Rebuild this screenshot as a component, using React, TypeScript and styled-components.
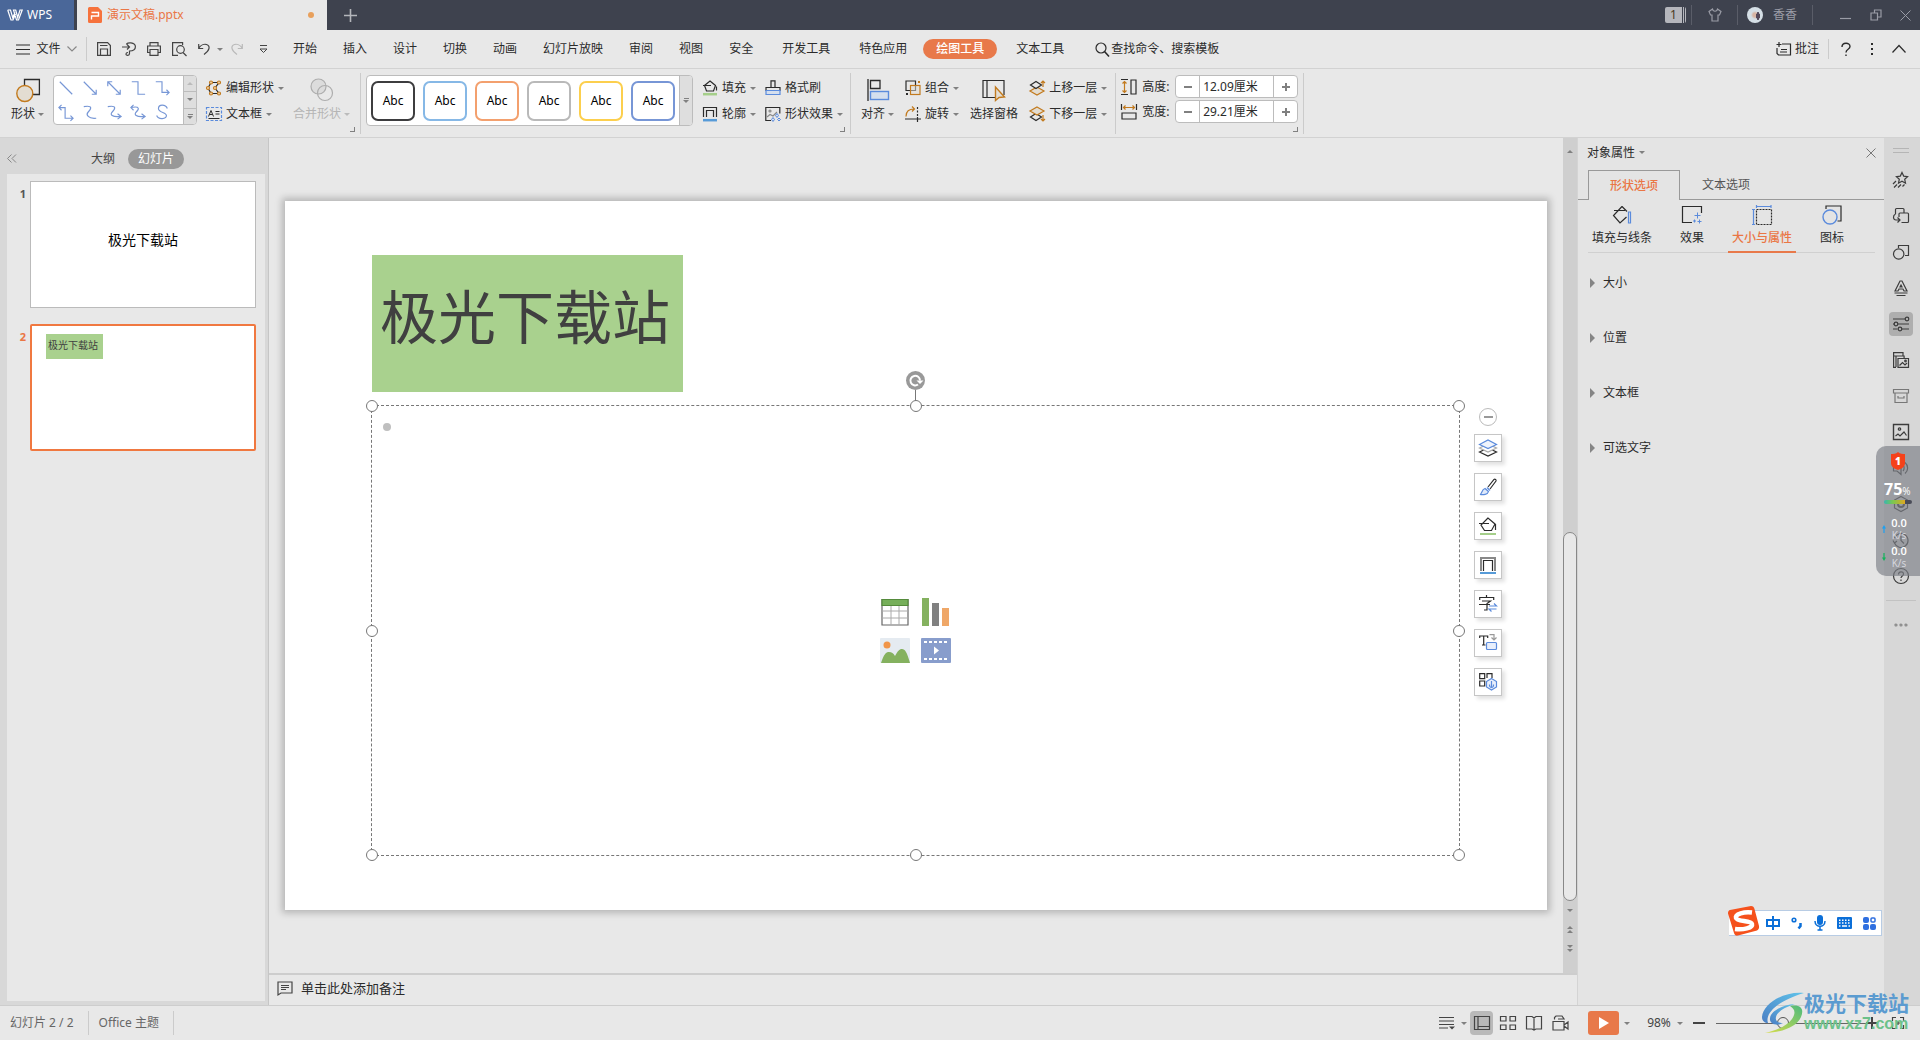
import React from "react";
import styled, { createGlobalStyle, css } from "styled-components";

const C = {
  accent: "#e8794a",
  accentText: "#ea7645",
  text: "#2b2b2b",
  line: "#d2d2d2",
  panel: "#e8e8e8",
  shade: "#d8d8d8",
  amber: "#c27a1e",
  sand: "#e3ddd2",
  blue: "#5b8bdc",
  sky: "#d5dfee",
};

const Global = createGlobalStyle`
  *, *::before, *::after { box-sizing: border-box; }
  body { margin: 0; }
  body, button, input {
    font-family: "Noto Sans", "Noto Sans CJK SC", sans-serif;
    font-size: 12px;
    line-height: 16px;
    color: ${C.text};
  }
  button {
    display: flex;
    align-items: center;
    justify-content: center;
    flex: none;
    margin: 0;
    padding: 0;
    border: 0;
    background: none;
    white-space: nowrap;
  }
`;

/* ---------- icons ---------- */

const Svg = styled.svg`
  display: block;
  flex: none;
  fill: none;
  stroke: currentColor;
  stroke-width: 1.2;
  overflow: visible;
`;

type Art = { w: number; h: number; art: React.ReactNode };

const ICONS: Record<string, Art> = {
  wps: { w: 16, h: 12, art: <path strokeWidth="1.2" d="M.7 1h2.800l2.200 7.500L8 3.500M.7 1l3.300 10h2L8.500 5M6.500 1h2.200l2 7.500L13 1h2.200l-3.700 10h-2z" /> },
  ppt: {
    w: 14, h: 16,
    art: (<><path fill="#f6723c" stroke="none" d="M1.500 0h8.500l4 4v10.500a1.500 1.500 0 0 1-1.500 1.500h-11A1.500 1.500 0 0 1 0 14.500v-13A1.500 1.500 0 0 1 1.500 0z" /><path stroke="#fff" strokeWidth="1.4" d="M3.500 12.500V9h7V5.500h-7" /></>),
  },
  plus: { w: 13, h: 13, art: <path strokeWidth="1.6" d="M6.500 0v13M0 6.500h13" /> },
  shirt: { w: 14, h: 14, art: <path d="M4.500 1 1 3.500 2.500 7H4v6h6V7h1.500L13 3.500 9.500 1C9 4 5 4 4.500 1z" /> },
  min: { w: 11, h: 14, art: <path d="M0 10.500h11" /> },
  restore: { w: 12, h: 14, art: <path d="M1 5h6.500v7H1zM4.500 5V2H11v7H7.500" /> },
  close: { w: 11, h: 11, art: <path strokeWidth="1" d="m.5.5 10 10m0-10-10 10" /> },
  burger: { w: 14, h: 11, art: <path d="M0 1h14M0 5.500h14M0 10h14" /> },
  down: { w: 10, h: 6, art: <path stroke="#888" d="m.5.5 4.500 4.500L9.500.5" /> },
  up: { w: 14, h: 8, art: <path d="m.5 7.500 6.500-7 6.500 7" /> },
  save: { w: 14, h: 14, art: <path d="M.6 13.400V.6h10L13.400 3.500v9.900zM3 3.500h7.500M3.500 13V7h7v6" /> },
  exportPdf: { w: 14, h: 14, art: <path d="M4.500 2.500C4.500 0 13.400 0 13.400 4.800c0 3-2.400 4.200-5.900 4.200v2.500c0 2.500-3.500 2.500-3.500.5 0-1.300 1-1.500 2-1.500M0 5h7.500M5 2.500 7.500 5 5 7.500" /> },
  print: { w: 14, h: 14, art: <path d="M3 4V.6h8V4M3 10.500H.6V4h12.800v6.500H11M3 7.500h8v5.900H3z" /> },
  preview: { w: 15, h: 14, art: <><path d="M6 13.400H.6V.6h10V3" /><circle cx="8.500" cy="7.500" r="3.800" /><path d="m11 10.500 3.500 3.500" /></> },
  undo: { w: 12, h: 12, art: <path d="M.7 1v4.500h4.500M.7 5.500C2.500 2 6 .8 8.500 1.500c4 1.300 3.500 6-2.500 10" /> },
  redo: { w: 12, h: 12, art: <path stroke="#b9b9b9" d="M11.300 1v4.500H6.800M11.300 5.500C9.500 2 6 .8 3.500 1.500c-4 1.300-3.500 6 2.500 10" /> },
  custom: { w: 9, h: 9, art: <path strokeWidth="1" d="M1 .5h7M1 4h7L4.500 7.500z" /> },
  search: { w: 15, h: 15, art: <><circle cx="6" cy="6" r="5" /><path strokeWidth="1.6" d="m9.500 9.500 4.500 5" /></> },
  comment: { w: 15, h: 14, art: <path d="M6 2h8.500v11h-12L1 11.500V6M3 0v5M.5 2.500h5M5 7.500h6M4 10h7" /> },
  help: { w: 10, h: 15, art: <path strokeWidth="1.400" d="M1 5C1 0 9 0 9 4.500 9 7.500 5 7 5 10.500M5 12.500V14" /> },
  dots: { w: 3, h: 14, art: <path fill="currentColor" stroke="none" d="M0 1h2v2H0zM0 6h2v2H0zM0 11h2v2H0z" /> },

  shape: { w: 24, h: 24, art: <><path strokeWidth="1.300" d="M8.500 7V1.500H23.400V16.500H17" /><circle cx="8.800" cy="15.500" r="8" fill={C.sand} stroke={C.amber} strokeWidth="1.400" /></> },
  editShape: {
    w: 16, h: 16,
    art: (<><path d="M5 2.500h8L9 8l4 5.500H5L2 8z" /><g fill="#f3d9b4" stroke={C.amber}><circle cx="5" cy="2.500" r="1.500" /><circle cx="13" cy="2.500" r="1.500" /><circle cx="2" cy="8" r="1.500" /><circle cx="9" cy="8" r="1.500" /><circle cx="5" cy="13.500" r="1.500" /><circle cx="13" cy="13.500" r="1.500" /></g></>),
  },
  textBox: {
    w: 16, h: 16,
    art: (<><rect x=".5" y="1.500" width="15" height="13" stroke={C.blue} strokeDasharray="3 1.500" /><path d="m2.500 10.500 2.500-6 2.500 6M3.500 8.500h3M9.500 5.500h4M9.500 8h4M2.500 12.500h11" strokeWidth="1" /></>),
  },
  merge: { w: 24, h: 24, art: <><circle cx="8.500" cy="8.500" r="7.500" fill="#dcdcdc" stroke="#adadad" /><circle cx="15" cy="15" r="7.500" stroke="#adadad" /></> },
  fill: { w: 16, h: 16, art: <><path d="m8 1 5.500 4.500-2 5.500h-7L2.500 5.500zM1 5.500h8M14.500 6.500v4" /><path stroke="#a5cf8a" strokeWidth="2.500" d="M1 14.200h14" /></> },
  outline: { w: 16, h: 16, art: <><path d="M1.500 11V1.500h13V11M4.500 11V4.500h7V11" /><path stroke="#579bd8" strokeWidth="2.500" d="M1 14.200h14" /></> },
  painter: { w: 16, h: 16, art: <><path d="M6 7.500V.8h4v6.700M1 11V7.500h14V11" /><path fill={C.sky} stroke={C.blue} d="M1 14.500V10.500h14v4z" /></> },
  effect: {
    w: 16, h: 16,
    art: (<><path d="M6 14.500H.8V1.500h14v6" /><circle cx="5" cy="5" r="1" stroke="#8a8a8a" /><path stroke="#8a8a8a" d="m2 11 3-2.500 3 1.500 4-4" /><path stroke={C.blue} fill={C.sky} strokeWidth="1" d="m12 7.500 1.500 2-1.500 2-1.500-2zM8 11.500l1.500 2-1.500 2-1.500-2zM14 12l1.500 1.500L14 15l-1.500-1.500z" /></>),
  },
  align: { w: 22, h: 22, art: <><path strokeWidth="1.300" d="M1 0v22M3.500 1.500h9.500v8H3.500z" /><rect x="3.500" y="12.500" width="18" height="8" fill={C.sky} stroke={C.blue} strokeWidth="1.400" /></> },
  group: { w: 16, h: 16, art: <><path d="M1 1h9.500v9.500H1z" /><rect x="5.500" y="5.500" width="9.500" height="9" fill={C.sand} fillOpacity=".5" stroke={C.amber} /><path stroke={C.amber} strokeWidth="2" d="M13 2h2" /><path strokeWidth="2" d="M1 14h2" /></> },
  rotate: { w: 16, h: 16, art: <><path stroke={C.amber} d="M1 10.500C1 5 4 3 9 3M7 .5 9.500 3 7 5.500" /><path d="M0 13h16M12.500 16v-5" /><path strokeDasharray="2 1.500" d="M12.500 1v9" /></> },
  pane: { w: 24, h: 24, art: <><path d="M13 19.500H1V2.500h21V17M5 2.500v17" /><path fill={C.sand} stroke={C.amber} strokeWidth="1.400" d="M13.500 9v13.500l3.500-3 5.500-.5z" /></> },
  raise: { w: 16, h: 16, art: <><path fill={C.sand} stroke={C.amber} d="m8 7 7 4-7 4-7-4z" /><path fill={C.panel} d="m7 1.500 5.500 3.500L7 8.500 1.500 5z" /><path stroke={C.amber} d="M14 7V1M12 3l2-2 2 2" /></> },
  lower: { w: 16, h: 16, art: <><path fill={C.panel} d="m7 7.500 5.500 3.500L7 14.500 1.500 11z" /><path fill={C.sand} stroke={C.amber} d="m8 1 7 4-7 4-7-4z" /><path stroke={C.amber} d="M14 9v6M12 13l2 2 2-2" /></> },
  tall: { w: 16, h: 16, art: <><path d="M0 .5h7M0 15.500h7M10 1h5v14h-5z" /><path stroke={C.amber} d="M3.500 2.500v11M1.500 4.500l2-2 2 2M1.500 11.500l2 2 2-2" /></> },
  wide: { w: 16, h: 16, art: <><path d="M.5 0v6M15.500 0v6M1 9h14v6H1z" /><path stroke={C.amber} d="M2.500 3.500h11M4.500 1.500l-2 2 2 2M11.500 1.500l2 2-2 2" /></> },

  note: { w: 16, h: 15, art: <path stroke="#444" d="M1 14V1h14v11H4zM4 4.500h8M4 6.500h8M4 8.500h5" /> },
  collapse: { w: 10, h: 9, art: <path stroke="#888" strokeWidth="1" d="M4.500.5.5 4.500l4 4M9 .5 5 4.500l4 4" /> },

  layers: { w: 18, h: 18, art: <><path d="m.5 13 8.500-4 8.500 4L9 17z" /><path stroke="#aaa" fill="#fff" d="M.5 9 9 5l8.500 4L9 13z" /><path stroke={C.blue} fill="#eef3fc" d="M.5 5.500 9 1l8.500 4.500L9 9.500z" /></> },
  brush: { w: 18, h: 18, art: <><path d="M9 9 15 1.500c1-.8 2.500.5 2 1.500l-6 8" /><path stroke={C.blue} fill="#dfe9fa" d="M1 16.500c2-.5 1.500-5 5-6l3.500 3C9 16.500 4 17 1 16.500zM8 9.500l3 3" /></> },
  bigFill: { w: 18, h: 18, art: <><path d="M9 1 2 8l3.500 5.500h7L16 7zM0 6.500h10M16.500 7v6" /><path stroke="#a5cf8a" strokeWidth="2" d="M1 17h16" /></> },
  bigLine: { w: 18, h: 18, art: <><path stroke="#888" strokeWidth="2" d="M2 15V2h14v13" /><path d="M4.500 15V4.500h9V15" /><path stroke="#579bd8" strokeWidth="2" d="M1 17h16" /></> },
  glyph: { w: 18, h: 18, art: <><path d="M7.500 0v2.500M.7 5V2.500h14V5M3 6h8.500L8 8.500V15H5M0 9.500h11" /><path stroke={C.blue} d="M10 11h7.500L15 8.500M17.500 14H10l2.500 2.500" /></> },
  textShape: { w: 18, h: 18, art: <><path d="M.7 4V2h8v2M4.700 2v9M3 11h3.500" /><path stroke="#999" d="M10.500.7H15v5M12.500 3.500 15 6l2.500-2.500" /><rect x="7.500" y="8.500" width="10" height="7" rx="1" stroke={C.blue} fill="#e8effc" /></> },
  smart: { w: 18, h: 18, art: <><path d="M.7.7h5v5h-5zM8 5V.7h5V5M.7 8h5v5h-5z" /><path stroke={C.blue} fill="#e8effc" d="m12.500 5.500 5 3V14l-5 3-5-3V8.500z" /><path stroke={C.blue} d="M12.500 8v7M10.500 11.500c-.5 4 4.500 4 4 0" /></> },
  table: { w: 28, h: 28, art: <><path fill="#fff" stroke="#666" d="M1 1.500h26v25.500H1z" /><path stroke="#aaa" strokeWidth="1" d="M1 13h26M1 20h26M10 7v20M18 7v20" /><path fill="#76af5a" stroke="#558b3c" d="M1 1.500h26V7.500H1z" /></> },
  chart: { w: 28, h: 28, art: <g stroke="none"><path fill="#84b15f" d="M0 0h7v28H0z" /><path fill="#808080" d="M10 5h7v23h-7z" /><path fill="#efa768" d="M20 10h7v18h-7z" /></g> },
  photo: { w: 30, h: 25, art: <g stroke="none"><rect width="30" height="25" rx="1" fill="#e5ebf1" /><circle cx="7" cy="7" r="3.500" fill="#f09549" /><path fill="#84b15f" d="M1 25c3-9 5-11 8-11s4 1 6 4c3-5 4-7 7-7s5 3 8 14z" /></g> },
  video: { w: 30, h: 25, art: <><rect width="30" height="25" rx="1" fill="#889dcc" stroke="none" /><path stroke="#fff" strokeWidth="2" strokeDasharray="3 2" d="M3 4h24M3 21h24" /><path fill="#fff" stroke="none" d="m13 8.500 5 4-5 4z" /></> },
  spin: { w: 19, h: 19, art: <><circle cx="9.500" cy="9.500" r="9.500" fill="#999" stroke="none" /><path stroke="#fff" strokeWidth="2" d="M12 13.500a4.800 4.800 0 1 1 2-4" /><path fill="#fff" stroke="none" d="M10.500 9.500h7L14 13z" /></> },

  tabFill: { w: 20, h: 20, art: <><path d="m10 1.500 5 5M10 1.500 1.500 10.500 8 18l6.500-6M2 5.500h11" /><path stroke={C.blue} d="M16.500 7h2v11h-2z" /></> },
  tabEffect: { w: 20, h: 20, art: <><path d="M10 17.500H.5v-16h19V8" /><path stroke={C.blue} strokeWidth="1" d="M15.500 7.500v6M12.500 10.500h6M12.500 14.500v3M11 16h3M17.500 14.500v4M15.500 16.500h4" /></> },
  tabSize: { w: 20, h: 20, art: <><rect x="4.500" y="4.500" width="15" height="15" strokeDasharray="2 1" /><path stroke={C.blue} d="M4 1.500h15M4.500 0v3M19 0v3M1.500 4.500v15M0 4.500h3M0 19.500h3" /></> },
  tabIcon: { w: 20, h: 20, art: <><path d="M4 4V1h15v15h-3.500" /><circle cx="8" cy="12" r="7" stroke={C.blue} strokeWidth="1.400" /></> },
  panelClose: { w: 10, h: 10, art: <path strokeWidth="1" stroke="#777" d="m.5.500 9 9m0-9-9 9" /> },

  star: { w: 16, h: 16, art: <path d="m9 .5 1.700 3.600 3.900.5-2.900 2.700.8 3.900L9 9.300l-3.500 1.900.8-3.900L3.400 4.600l3.900-.5zM3 9l-3 3M4 12.500l-3 3M8 12.500l-3 3M11.500 12.500l-2 2" /> },
  swap: { w: 16, h: 16, art: <path d="M2.500 6V1.500a1 1 0 0 1 1-1H10a1 1 0 0 1 1 1V5M6 9V6a1 1 0 0 1 1-1h7.500a1 1 0 0 1 1 1v7.500a1 1 0 0 1-1 1H8.500M2.500 6C-.5 7.500 0 12 3 12h3.500M4.500 9.500 7 12l-2.500 2.500" /> },
  shapes: { w: 16, h: 16, art: <><path d="M5.500 4V1.500h10v10H12" /><circle cx="5.700" cy="10" r="5.200" /></> },
  fontA: { w: 16, h: 16, art: <path d="m2 11 5-10h2l5 10h-3l-1-2H6l-1 2zM7 7l1-2 1 2zM1.500 13h13M3.500 15.500h9" /> },
  sliders: { w: 16, h: 16, art: <><path d="M0 3h12M5 8h11M0 13h4.500M9 13h7M0 8h1" /><circle cx="14" cy="3" r="1.800" /><circle cx="3" cy="8" r="1.800" /><circle cx="7" cy="13" r="1.800" /></> },
  media: { w: 16, h: 16, art: <><path d="M3 15.400H.6V.6h9.400V4M.6 4h10.500V6M3 4v11M5 15.400h10.500V6.500H5z" /><path d="m6.500 13.500 3-3 2.500 2.500 2-2" /><circle cx="12.500" cy="9" r=".8" /></> },
  box: { w: 16, h: 16, art: <path stroke="#777" d="M.5 1.500h15V5H.5zM2 5v9.500h12V5M5 8v2h6V8" /> },
  picture: { w: 16, h: 16, art: <><path strokeWidth="1.400" d="M.5.500h15v15H.5z" /><circle cx="6.500" cy="5" r="1.200" /><path d="m2.500 12 2.500-2 2 2 4-4 2.500 3.500" /></> },
  speaker: { w: 16, h: 16, art: <path d="M.5 5H4l4-3.500v13L4 11H.5zM10 5c1.500 1.500 1.500 4.500 0 6M12 2.500c3.500 3 3.500 8 0 11" /> },
  hexa: { w: 16, h: 16, art: <><path d="M8 .5 14.500 4v8L8 15.500 1.500 12V4z" /><circle cx="8" cy="8" r="3" strokeWidth="2" /></> },
  history: { w: 16, h: 16, art: <path d="M1.500 11a7 7 0 1 0 0-5M0 8.500 1.500 11l2.500-2M8 4v4.500l3 3" /> },
  question: { w: 16, h: 16, art: <><circle cx="8" cy="8" r="7.500" /><path d="M5.500 6.500c0-3.500 5-3.500 5-.5C10.500 8 8 8 8 10M8 11.500V13" /></> },
  more: { w: 14, h: 4, art: <g stroke="#888"><circle cx="2" cy="2" r="1" /><circle cx="7" cy="2" r="1" /><circle cx="12" cy="2" r="1" /></g> },
  grip: { w: 16, h: 5, art: <path stroke="#b5b5b5" strokeWidth="1" d="M0 .5h16M0 4.500h16" /> },

  stLines: { w: 16, h: 14, art: <><path d="M0 1.500h15M0 5h15M0 8.500h15M0 12h9" /><path fill="currentColor" stroke="none" d="M10 10.500h6l-3 3z" /></> },
  stNormal: { w: 16, h: 14, art: <path d="M.5.500h15v13H.5zM4 .5v13M4 10.500h11.500" /> },
  stGrid: { w: 16, h: 14, art: <path d="M.5.500H6V5H.5zM10 .5h5.500V5H10zM.5 9H6v4.500H.5zM10 9h5.500v4.500H10z" /> },
  stBook: { w: 16, h: 14, art: <path d="M.5.500H6L8 2l2-1.500h5.500V13H10l-2 1-2-1H.5zM8 2v12" /> },
  stCam: { w: 17, h: 16, art: <path d="M1 15V6.500h11V15zM12 10l4-3v7l-4-3M2.500 4.500V2.500L4 1h6l2 3H6" /> },
  play: { w: 10, h: 12, art: <path fill="#fff" stroke="none" d="m0 0 10 6-10 6z" /> },
  minus: { w: 12, h: 2, art: <path strokeWidth="2" d="M0 1h12" /> },
  add: { w: 12, h: 12, art: <path strokeWidth="2" d="M0 6h12M6 0v12" /> },
  fit: { w: 12, h: 12, art: <path d="M.5 4V.5H4M8 .5h3.500V4M11.500 8v3.500H8M4 11.500H.5V8M4 6h4M6 4v4" /> },

  sogou: {
    w: 32, h: 30,
    art: (<><path fill="#f5511c" stroke="none" d="M2 4 23 0c2 0 3 1 3.500 3L31 20c.4 2-.5 4-2 4.500L10 29.500c-2 .5-3.500-.5-4-2.500L0 7.500C0 5.500.5 4.500 2 4z" /><path stroke="#fff" strokeWidth="4.500" d="M24 6.500C16 5.500 7 8 8 12s15 2 16 6-9 6-17 5" /></>),
  },
  zhong: { w: 14, h: 14, art: <path stroke="#0b6fd8" strokeWidth="2" d="M1 4h12v6H1zM7 0v14" /> },
  comma: { w: 12, h: 12, art: <><circle cx="3" cy="3" r="1.800" stroke="#0b6fd8" strokeWidth="1.600" /><path stroke="#0b6fd8" strokeWidth="2.500" d="M9.500 6v3l-2 2.500" /></> },
  mic: { w: 12, h: 16, art: <><rect x="3" y="0" width="6" height="10" rx="3" fill="#0b6fd8" stroke="none" /><path stroke="#0b6fd8" strokeWidth="1.500" d="M1 6c0 7 10 7 10 0M6 11.500V15M3.500 15h5" /></> },
  keys: { w: 15, h: 12, art: <><rect width="15" height="12" rx="1" fill="#0b6fd8" stroke="none" /><path stroke="#fff" strokeWidth="1.500" strokeDasharray="1.500 1.500" d="M2 3.200h11.500M2 6h11.500" /><path stroke="#fff" strokeWidth="1.500" d="M2 9h1.500M5 9h5M11.500 9h1.500" /></> },
  apps: { w: 13, h: 13, art: <g fill="#2f6fe0" stroke="none"><rect width="6" height="6" rx="2" /><rect y="7" width="6" height="6" rx="2" /><rect x="7" y="7" width="6" height="6" rx="2" /><rect x="8" y="1" width="4" height="4" rx="1" fill="#fff" stroke="#2f6fe0" strokeWidth="1.500" /></g> },
  shield: { w: 14, h: 18, art: <path fill="#f5411a" stroke="none" d="M7 0c2 2 5 2 7 2v9c0 4-4 6-7 7-3-1-7-3-7-7V2c2 0 5 0 7-2z" /> },
  netUp: { w: 4, h: 8, art: <path fill="#1ea0f0" stroke="none" d="M2 0l2 3.500H2.600V8H1.400V3.500H0z" /> },
  netDown: { w: 4, h: 8, art: <path fill="#12b35a" stroke="none" d="M2 8l2-3.500H2.600V0H1.400v4.500H0z" /> },
};

const Icon = ({ n }: { n: string }) => {
  const { w, h, art } = ICONS[n];
  return (
    <Svg width={w} height={h} viewBox={`0 0 ${w} ${h}`} aria-hidden="true">
      {art}
    </Svg>
  );
};

const Caret = styled.i<{ $up?: boolean; $pale?: boolean }>`
  flex: none;
  width: 0;
  height: 0;
  border: 3px solid transparent;
  ${(p) => (p.$up ? "border-top-width: 0; border-bottom-color:" : "border-bottom-width: 0; border-top-color:")} ${(p) => (p.$pale ? "#bbb" : "#808080")};
`;

/* ---------- frame ---------- */

const Shell = styled.div`
  position: relative;
  display: flex;
  flex-direction: column;
  height: 100vh;
  min-height: 720px;
  overflow: hidden;
  background: ${C.panel};
`;

const TitleBar = styled.header`
  display: flex;
  flex: none;
  height: 30px;
  background: #3e424e;
`;
const Brand = styled.button`
  justify-content: flex-start;
  gap: 4px;
  width: 74px;
  margin-right: 3px;
  padding-left: 7px;
  background: #4a6799;
  color: #fff;
`;
const DocTab = styled.button`
  gap: 5px;
  width: 250px;
  padding: 0 13px 0 11px;
  background: ${C.panel};
  color: ${C.accentText};
`;
const Unsaved = styled.i`
  width: 6px;
  height: 6px;
  margin-left: auto;
  border-radius: 50%;
  background: #e8a05c;
`;
const NewTab = styled.button`
  width: 46px;
  color: #b4b6bb;
`;
const TitleEnd = styled.div`
  display: flex;
  align-items: center;
  margin-left: auto;
  padding-right: 9px;
  color: #9a9ca6;
`;
const WindowBadge = styled.button`
  width: 21px;
  height: 16px;
  margin-right: 5px;
  padding-right: 4px;
  border-radius: 2px;
  background: linear-gradient(90deg, #b5b6bc 17px, #3e424e 17px 18px, #b5b6bc 18px 19px, #3e424e 19px 20px, #b5b6bc 20px);
  color: #4b3a22;
`;
const TitleRule = styled.i`
  width: 1px;
  height: 20px;
  background: #5a5d68;
`;
const TitleBtn = styled.button<{ $w: number; $l?: number; $r?: number }>`
  gap: 10px;
  width: ${(p) => p.$w}px;
  margin: 0 ${(p) => p.$r || 0}px 0 ${(p) => p.$l || 0}px;
  color: inherit;
`;
const Avatar = styled.span`
  width: 16px;
  height: 16px;
  border-radius: 50%;
  background: radial-gradient(ellipse 2px 4px at 11px 9px, #54495a 90%, transparent), radial-gradient(circle at 8px 8px, #d9b5a4 2px, #d5dfe6 4px);
`;

const MenuBar = styled.nav`
  display: flex;
  align-items: center;
  flex: none;
  height: 39px;
  padding: 0 14px 0 16px;
  border-bottom: 1px solid ${C.line};
`;
const FileBtn = styled.button`
  gap: 6px;
  width: 61px;
  justify-content: space-between;
`;
const VRule = styled.i<{ $h: number; $m?: string }>`
  flex: none;
  width: 1px;
  height: ${(p) => p.$h}px;
  margin: ${(p) => p.$m || "0"};
  background: #cbcbcb;
`;
const QuickBar = styled.div`
  display: flex;
  align-items: center;
  gap: 11px;
  color: #444;
`;
const QuickBtn = styled.button<{ $l?: number }>`
  gap: 7px;
  margin-left: ${(p) => p.$l || 0}px;
  color: inherit;
`;
const MenuTabs = styled.div`
  display: flex;
  margin-left: 12px;
`;
const MenuTab = styled.button<{ $on?: boolean; $l?: number }>`
  height: 20px;
  padding: 0 13px;
  margin-left: ${(p) => p.$l || 0}px;
  border-radius: 10px;
  ${(p) => p.$on && css`background: ${C.accent}; color: #fff; font-weight: 500;`}
`;
const SearchBtn = styled.button`
  gap: 1px;
  margin-left: 18px;
`;
const MenuEnd = styled.div`
  display: flex;
  align-items: center;
  margin-left: auto;
  color: #444;
`;
const EndBtn = styled.button<{ $l?: number }>`
  gap: 4px;
  margin-left: ${(p) => p.$l || 0}px;
`;

/* ---------- ribbon ---------- */

const Ribbon = styled.section`
  display: flex;
  flex: none;
  height: 69px;
  padding: 4px 0 3px 5px;
  border-bottom: 1px solid ${C.line};
`;
const Group = styled.div<{ $gap: number; $l?: number; $r?: number }>`
  position: relative;
  display: flex;
  align-items: flex-start;
  gap: ${(p) => p.$gap}px;
  padding: 2px ${(p) => p.$r ?? 9}px 0 ${(p) => p.$l ?? 5}px;
  border-right: 1px solid #cbcbcb;
`;
const Launcher = styled.button`
  position: absolute;
  right: 5px;
  bottom: 2px;
  width: 5px;
  height: 5px;
  border: solid #808080;
  border-width: 0 1px 1px 0;
`;
const BigBtn = styled.button<{ $off?: boolean }>`
  flex-direction: column;
  justify-content: flex-start;
  gap: 4px;
  padding-top: 3px;
  ${(p) => p.$off && "color: #b5b5b5;"}
`;
const BigArt = styled.span`
  display: grid;
  place-items: center;
  height: 24px;
`;
const CaretLabel = styled.span`
  display: flex;
  align-items: center;
  gap: 3px;
`;
const Stack = styled.div`
  display: flex;
  flex-direction: column;
`;
const RowBtn = styled.button`
  justify-content: flex-start;
  gap: 4px;
  height: 26px;
`;
const LineGallery = styled.div`
  display: flex;
  width: 144px;
  height: 50px;
  border: 1px solid #bcbcbc;
  border-radius: 4px;
  background: #fff;
  overflow: hidden;
`;
const LineGrid = styled.div`
  display: grid;
  flex: 1;
  grid-template-columns: repeat(5, 24px);
  grid-template-rows: 24px 24px;
  color: #7797d6;
`;
const LineBtn = styled.button`
  color: inherit;
`;
const Steps = styled.div`
  display: flex;
  flex-direction: column;
  width: 13px;
  border-left: 1px solid #bcbcbc;
  background: #dedede;
`;
const Step = styled.button`
  flex: 1;
  flex-direction: column;
  gap: 1px;
  & + & { border-top: 1px solid #bcbcbc; }
`;
const Dash = styled.i`
  width: 5px;
  height: 1px;
  background: #808080;
`;
const StyleGallery = styled.div`
  display: flex;
  height: 51px;
  border: 1px solid #bcbcbc;
  border-radius: 4px;
  background: #fff;
  overflow: hidden;
`;
const Swatches = styled.div`
  display: flex;
  align-items: center;
  gap: 8px;
  padding: 0 4px;
`;
const Swatch = styled.button<{ $c: string }>`
  width: 44px;
  height: 40px;
  border: 2px solid ${(p) => p.$c};
  border-radius: 7px;
  background: #fff;
  color: #000;
`;
const SizeRow = styled.div`
  display: flex;
  align-items: center;
  gap: 5px;
  height: 23px;
  margin-bottom: 2px;
`;
const SizeLabel = styled.label`
  width: 28px;
`;
const Spin = styled.div`
  display: flex;
  width: 123px;
  height: 23px;
  border: 1px solid #bcbcbc;
  border-radius: 4px;
  background: #fff;
`;
const SpinBtn = styled.button`
  width: 23px;
  color: #808080;
`;
const SpinInput = styled.input`
  flex: 1;
  min-width: 0;
  padding: 0 3px;
  border: solid #bcbcbc;
  border-width: 0 1px;
  outline: 0;
  background: none;
`;

/* ---------- left panel ---------- */

const Body = styled.main`
  display: flex;
  flex: 1;
  min-height: 0;
`;
const Outline = styled.aside`
  display: flex;
  flex-direction: column;
  flex: none;
  width: 269px;
  padding: 0 3px 4px 7px;
  border-right: 1px solid #c6c6c6;
  background: ${C.shade};
`;
const OutlineHead = styled.div`
  display: flex;
  align-items: center;
  height: 36px;
  padding-top: 5px;
`;
const OutlineTab = styled.button<{ $on?: boolean; $l?: number }>`
  height: 20px;
  padding: 0 ${(p) => (p.$on ? 10 : 0)}px;
  margin-left: ${(p) => p.$l || 0}px;
  border-radius: 10px;
  color: ${(p) => (p.$on ? "#fff" : "#444")};
  background: ${(p) => (p.$on ? "#989898" : "none")};
`;
const ThumbList = styled.ol`
  flex: 1;
  margin: 0;
  padding: 7px 9px 0 10px;
  list-style: none;
  background: ${C.panel};
`;
const ThumbItem = styled.li<{ $on?: boolean }>`
  display: flex;
  gap: 4px;
  justify-content: flex-end;
  margin-bottom: 16px;
  font-family: "Noto Sans", sans-serif;
  font-weight: 700;
  font-size: 11px;
  line-height: 26px;
  color: ${(p) => (p.$on ? C.accentText : "#555")};
`;
const Thumb = styled.button<{ $on?: boolean }>`
  position: relative;
  width: 226px;
  height: 127px;
  padding-bottom: 10px;
  border: ${(p) => (p.$on ? "2px solid #f07840" : "1px solid #bbb")};
  border-radius: ${(p) => (p.$on ? 2 : 0)}px;
  background: #fff;
  color: #000;
  font-size: 14px;
`;
const MiniTitle = styled.span`
  position: absolute;
  left: 14px;
  top: 8px;
  width: 57px;
  height: 25px;
  padding: 3px 0 0 2px;
  background: #a9d18e;
  color: #404040;
  font-size: 10px;
  text-align: left;
`;

/* ---------- canvas ---------- */

const Center = styled.section`
  display: flex;
  flex-direction: column;
  flex: 1;
  min-width: 0;
`;
const Stage = styled.div`
  display: flex;
  flex: 1;
  min-height: 0;
  border-bottom: 2px solid #cdcdcd;
`;
const Desk = styled.div`
  display: flex;
  flex: 1;
  padding: 63px 16px 63px;
`;
const Slide = styled.div`
  position: relative;
  flex: 1;
  background: #fff;
  box-shadow: 0 0 7px 3px rgba(0, 0, 0, 0.22);
`;
const SlideTitle = styled.div`
  position: absolute;
  left: 87px;
  top: 54px;
  width: 311px;
  height: 137px;
  padding-left: 8px;
  background: #a9d18e;
  color: #404040;
  font-size: 58px;
  line-height: 124px;
  white-space: nowrap;
`;
const Selection = styled.div`
  position: absolute;
  inset: 204px 87px 54px 86px;
  display: grid;
  place-items: center;
  border: 1px dashed #777;
`;
const Handle = styled.i<{ $x: string; $y: string }>`
  position: absolute;
  left: ${(p) => p.$x};
  top: ${(p) => p.$y};
  width: 12px;
  height: 12px;
  margin: -6px;
  border: 1px solid #777;
  border-radius: 50%;
  background: #fff;
`;
const Rotor = styled.span`
  position: absolute;
  left: 50%;
  top: -35px;
  display: flex;
  flex-direction: column;
  align-items: center;
  width: 20px;
  height: 35px;
  margin-left: -10px;
`;
const RotorStem = styled.i`
  flex: 1;
  width: 1px;
  background: #777;
`;
const Bullet = styled.i`
  position: absolute;
  left: 11px;
  top: 17px;
  width: 8px;
  height: 8px;
  border-radius: 50%;
  background: #bfbfbf;
`;
const InsertGrid = styled.div`
  display: grid;
  grid-template-columns: 30px 30px;
  gap: 12px 11px;
`;
const FloatTools = styled.div`
  position: absolute;
  right: 45px;
  top: 206px;
  display: flex;
  flex-direction: column;
  align-items: center;
  gap: 11px;
`;
const FoldBtn = styled.button`
  width: 18px;
  height: 18px;
  margin: 1px 0 -3px;
  border: 1px solid #bbb;
  border-radius: 50%;
  background: #fff;
`;
const FoldDash = styled.i`
  width: 9px;
  height: 2px;
  background: #999;
`;
const FloatBtn = styled.button`
  width: 28px;
  height: 28px;
  border: 1px solid #c6c6c6;
  background: #fff;
  box-shadow: 3px 3px 4px rgba(0, 0, 0, 0.12);
`;
const ScrollCol = styled.div`
  display: flex;
  flex-direction: column;
  width: 14px;
  padding-bottom: 15px;
  background: #cfcfcf;
`;
const ScrollBtn = styled.button<{ $h: number }>`
  flex-direction: column;
  gap: 1px;
  height: ${(p) => p.$h}px;
`;
const ScrollGap = styled.div`
  flex: 1;
`;
const ScrollThumb = styled.div`
  flex: 1;
  border: 1px solid #888;
  border-radius: 7px;
  background: ${C.panel};
`;
const Notes = styled.button`
  gap: 8px;
  height: 30px;
  padding: 0 8px;
  justify-content: flex-start;
  padding-bottom: 4px;
  font-size: 13px;
`;

/* ---------- property panel ---------- */

const Props = styled.aside`
  flex: none;
  width: 307px;
  border-left: 1px solid #d4d4d4;
  background: #e4e4e4;
`;
const PropsHead = styled.div`
  display: flex;
  align-items: center;
  justify-content: space-between;
  height: 32px;
  padding: 0 8px 3px 9px;
`;
const HeadBtn = styled.button`
  gap: 4px;
`;
const PropsTabs = styled.div`
  display: flex;
  height: 30px;
  padding-left: 10px;
  box-shadow: inset 0 -1px #999;
`;
const PropsTab = styled.button<{ $on?: boolean }>`
  width: 92px;
  border: ${(p) => (p.$on ? "1px solid #999" : "0")};
  border-bottom: 0;
  background: ${(p) => (p.$on ? "#e4e4e4" : "none")};
  color: ${(p) => (p.$on ? C.accentText : "#555")};
  font-weight: ${(p) => (p.$on ? 500 : 400)};
`;
const SubTabs = styled.div`
  display: flex;
  gap: 20px;
  height: 53px;
  margin: 0 9px 0 10px;
  border-bottom: 1px solid #d0d0d0;
`;
const SubTab = styled.button<{ $on?: boolean }>`
  flex-direction: column;
  justify-content: flex-start;
  gap: 5px;
  height: 53px;
  padding: 5px 4px 0;
  border-bottom: 2px solid ${(p) => (p.$on ? C.accent : "transparent")};
  color: ${(p) => (p.$on ? C.accentText : C.text)};
  font-weight: ${(p) => (p.$on ? 500 : 400)};
  svg { color: #2b2b2b; }
`;
const Sections = styled.div`
  display: flex;
  flex-direction: column;
  align-items: flex-start;
  gap: 39px;
  padding: 22px 12px;
`;
const Section = styled.button`
  gap: 8px;
`;
const Wedge = styled.i`
  width: 0;
  height: 0;
  border: solid transparent;
  border-width: 5px 0 5px 5px;
  border-left-color: #858585;
`;
const Rail = styled.aside`
  display: flex;
  flex-direction: column;
  align-items: center;
  flex: none;
  width: 36px;
  padding: 10px 2px 0 0;
  background: #d7d7d7;
`;
const RailBtn = styled.button<{ $on?: boolean }>`
  width: 24px;
  height: 24px;
  margin-bottom: 12px;
  border-radius: 4px;
  background: ${(p) => (p.$on ? "#aeaeae" : "none")};
  color: #3c3c3c;
`;
const RailGrip = styled.div`
  height: 20px;
`;
const RailRule = styled.i`
  width: 30px;
  height: 1px;
  margin-bottom: 12px;
  background: #c2c2c2;
`;

/* ---------- status bar ---------- */

const Status = styled.footer`
  display: flex;
  align-items: center;
  flex: none;
  height: 35px;
  padding: 0 16px 0 10px;
  border-top: 1px solid #cdcdcd;
  color: #666;
`;
const StatusEnd = styled.div`
  display: flex;
  align-items: center;
  margin-left: auto;
  color: #444;
`;
const StBtn = styled.button<{ $w: number; $l?: number; $r?: number; $on?: boolean }>`
  gap: 6px;
  width: ${(p) => p.$w}px;
  height: 24px;
  margin: 0 ${(p) => p.$r || 0}px 0 ${(p) => p.$l || 0}px;
  border-radius: 4px;
  background: ${(p) => (p.$on ? "#b9b9b9" : "none")};
  color: #444;
`;
const PlayBtn = styled.button`
  width: 31px;
  height: 24px;
  margin-left: 12px;
  border-radius: 3px;
  background: ${C.accent};
`;
const Zoom = styled.input`
  width: 150px;
  height: 16px;
  margin: 0;
  appearance: none;
  background: linear-gradient(#666, #666) center / 100% 1px no-repeat;
  &::-webkit-slider-thumb {
    appearance: none;
    width: 12px;
    height: 12px;
    border: 1px solid #555;
    border-radius: 50%;
    background: ${C.panel};
  }
`;

/* ---------- desktop overlays ---------- */

const Meter = styled.div`
  position: absolute;
  right: 0;
  top: 446px;
  display: flex;
  flex-direction: column;
  width: 44px;
  height: 130px;
  padding: 6px 8px 0;
  border-radius: 10px 0 0 10px;
  background: rgba(125, 127, 135, 0.66);
  color: #fff;
  font-family: "Open Sans", sans-serif;
`;
const MeterBadge = styled.span`
  display: grid;
  place-items: center;
  width: 14px;
  height: 18px;
  margin: 0 0 11px 7px;
  font-size: 10px;
  font-weight: 700;
  & > * { grid-area: 1 / 1; }
`;
const BadgeText = styled.b`
  z-index: 1;
`;
const MeterLoad = styled.span`
  display: flex;
  align-items: baseline;
  font-size: 10px;
  line-height: 17px;
  height: 19px;
`;
const MeterNumber = styled.b`
  font-size: 16px;
`;
const MeterBar = styled.i`
  width: 28px;
  height: 4px;
  margin-bottom: 11px;
  border-radius: 2px;
  background: linear-gradient(90deg, #38b6b0, #7cc850 9px, #e0a820 21px, #4a4c58 21px);
`;
const NetRow = styled.span`
  display: grid;
  grid-template-columns: 4px 1fr;
  align-items: center;
  height: 28px;
  margin: 0 0 0 -3px;
  padding-left: 1px;
  text-align: center;
  font-size: 11px;
  font-weight: 600;
  line-height: 12px;
`;
const Unit = styled.small`
  display: block;
  color: #d9dae0;
  font-size: 10px;
  font-weight: 400;
  line-height: 12px;
`;
const Ime = styled.div`
  position: absolute;
  right: 38px;
  bottom: 104px;
  display: flex;
  align-items: center;
  height: 26px;
  padding: 0 5px 0 0;
  gap: 11px;
  border: 1px solid #b8cce4;
  border-left: 0;
  background: #fff;
`;
const ImeLogo = styled.span`
  margin: -4px -5px 0 -1px;
`;
const Watermark = styled.div`
  position: absolute;
  right: 11px;
  bottom: 6px;
  display: flex;
  align-items: center;
  pointer-events: none;
`;
const MarkText = styled.div`
  display: flex;
  flex-direction: column;
  color: #5b9bd0;
  font-size: 21px;
  font-weight: 700;
  line-height: 22px;
`;
const MarkUrl = styled.span`
  color: #6cc18a;
  font-family: "Liberation Sans", sans-serif;
  font-size: 16px;
  font-weight: 700;
  line-height: 20px;
`;

/* ---------- content ---------- */

const LINES = [
  "M2 2l14 14",
  "M2 2l14 14M16 11v5h-5",
  "M2 2l14 14M16 11v5h-5M2 7V2h5",
  "M2 2h7v14h8",
  "M2 2h7v12h7M14 11l3 3-3 3",
  "M1 4h7v12h8M4 1 1 4l3 3M14 13l3 3-3 3",
  "M2 3c11-2 8 3 5 6s0 8 9 7",
  "M2 3c11-2 8 3 5 6s0 6 9 5M13 11l4 3-4 3",
  "M1 4c11-2 9 2 6 5s0 6 9 5M4 1 1 4l3 3M13 11l4 3-4 3",
  "M15 5C13 0 5 0 5 5s9 4 9 8-9 5-11 0",
];
const TABS: [string, number?, boolean?][] = [
  ["开始"], ["插入"], ["设计"], ["切换"], ["动画"], ["幻灯片放映"], ["审阅"], ["视图"], ["安全"],
  ["开发工具", 3], ["特色应用", 3], ["绘图工具", 3, true], ["文本工具", 6],
];
const SWATCHES = ["#3d3d3f", "#86b8e6", "#f3a06e", "#b9b9b9", "#fccf4d", "#7796d6"];
const RAIL = ["star", "swap", "shapes", "fontA", "sliders", "media", "box", "picture", "speaker", "hexa", "history", "question"];
const FLOATS = ["layers", "brush", "bigFill", "bigLine", "glyph", "textShape", "smart"];
const HANDLES = ["0%,0%", "50%,0%", "100%,0%", "0%,50%", "100%,50%", "0%,100%", "50%,100%", "100%,100%"];
const SUBTABS = [["tabFill", "填充与线条"], ["tabEffect", "效果"], ["tabSize", "大小与属性"], ["tabIcon", "图标"]];

const Row = ({ icon, text, caret = true }: { icon: string; text: string; caret?: boolean }) => (
  <RowBtn>
    <Icon n={icon} />
    {text}
    {caret && <Caret />}
  </RowBtn>
);

const Big = ({ icon, text, caret, off }: { icon: string; text: string; caret?: boolean; off?: boolean }) => (
  <BigBtn $off={off} disabled={off}>
    <BigArt><Icon n={icon} /></BigArt>
    <CaretLabel>{text}{caret && <Caret $pale={off} />}</CaretLabel>
  </BigBtn>
);

const Size = ({ id, icon, label, value }: { id: string; icon: string; label: string; value: string }) => (
  <SizeRow>
    <Icon n={icon} />
    <SizeLabel htmlFor={id}>{label}</SizeLabel>
    <Spin>
      <SpinBtn aria-label="减小"><Svg width="8" height="8" viewBox="0 0 8 8"><path strokeWidth="2" d="M0 4h8" /></Svg></SpinBtn>
      <SpinInput id={id} defaultValue={value} />
      <SpinBtn aria-label="增大"><Svg width="8" height="8" viewBox="0 0 8 8"><path strokeWidth="2" d="M0 4h8M4 0v8" /></Svg></SpinBtn>
    </Spin>
  </SizeRow>
);

export default function App() {
  return (
    <Shell>
      <Global />
      <TitleBar>
        <Brand><Icon n="wps" />WPS</Brand>
        <DocTab><Icon n="ppt" />演示文稿.pptx<Unsaved /></DocTab>
        <NewTab aria-label="新建"><Icon n="plus" /></NewTab>
        <TitleEnd>
          <WindowBadge>1</WindowBadge>
          <TitleRule />
          <TitleBtn $w={45} aria-label="皮肤"><Icon n="shirt" /></TitleBtn>
          <TitleRule />
          <TitleBtn $w={68} $r={6}><Avatar />香香</TitleBtn>
          <TitleRule />
          <TitleBtn $w={49} $l={8} aria-label="最小化"><Icon n="min" /></TitleBtn>
          <TitleBtn $w={12} aria-label="还原"><Icon n="restore" /></TitleBtn>
          <TitleBtn $w={11} $l={18} aria-label="关闭"><Icon n="close" /></TitleBtn>
        </TitleEnd>
      </TitleBar>

      <MenuBar>
        <FileBtn><Icon n="burger" />文件<Icon n="down" /></FileBtn>
        <VRule $h={24} $m="0 10px 0 9px" />
        <QuickBar>
          <QuickBtn aria-label="保存"><Icon n="save" /></QuickBtn>
          <QuickBtn aria-label="输出"><Icon n="exportPdf" /></QuickBtn>
          <QuickBtn aria-label="打印"><Icon n="print" /></QuickBtn>
          <QuickBtn aria-label="预览"><Icon n="preview" /></QuickBtn>
          <QuickBtn aria-label="撤销"><Icon n="undo" /><Caret /></QuickBtn>
          <QuickBtn $l={-3} aria-label="恢复"><Icon n="redo" /></QuickBtn>
          <QuickBtn $l={5} aria-label="自定义"><Icon n="custom" /></QuickBtn>
        </QuickBar>
        <MenuTabs>
          {TABS.map(([t, l, on]) => <MenuTab key={t} $l={l} $on={on}>{t}</MenuTab>)}
        </MenuTabs>
        <SearchBtn><Icon n="search" />查找命令、搜索模板</SearchBtn>
        <MenuEnd>
          <EndBtn><Icon n="comment" />批注</EndBtn>
          <VRule $h={20} $m="0 0 0 9px" />
          <EndBtn $l={12} aria-label="帮助"><Icon n="help" /></EndBtn>
          <EndBtn $l={20} aria-label="更多"><Icon n="dots" /></EndBtn>
          <EndBtn $l={18} aria-label="折叠功能区"><Icon n="up" /></EndBtn>
        </MenuEnd>
      </MenuBar>

      <Ribbon>
        <Group $gap={9} $l={6} $r={10}>
          <Big icon="shape" text="形状" caret />
          <LineGallery>
            <LineGrid>
              {LINES.map((d) => (
                <LineBtn key={d} aria-label="线条"><Svg width="16" height="16" viewBox="0 0 18 18"><path strokeWidth="1.300" d={d} /></Svg></LineBtn>
              ))}
            </LineGrid>
            <Steps>
              <Step aria-label="上"><Caret $up $pale /></Step>
              <Step aria-label="下"><Caret /></Step>
              <Step aria-label="全部"><Dash /><Caret /></Step>
            </Steps>
          </LineGallery>
          <Stack>
            <Row icon="editShape" text="编辑形状" />
            <Row icon="textBox" text="文本框" />
          </Stack>
          <Big icon="merge" text="合并形状" caret off />
          <Launcher aria-label="更多形状设置" />
        </Group>
        <Group $gap={9} $r={7}>
          <StyleGallery>
            <Swatches>{SWATCHES.map((c) => <Swatch key={c} $c={c}>Abc</Swatch>)}</Swatches>
            <Steps><Step aria-label="全部样式"><Dash /><Caret /></Step></Steps>
          </StyleGallery>
          <Stack>
            <Row icon="fill" text="填充" />
            <Row icon="outline" text="轮廓" />
          </Stack>
          <Stack>
            <Row icon="painter" text="格式刷" caret={false} />
            <Row icon="effect" text="形状效果" />
          </Stack>
          <Launcher aria-label="更多样式设置" />
        </Group>
        <Group $gap={11} $l={10} $r={8}>
          <Big icon="align" text="对齐" caret />
          <Stack>
            <Row icon="group" text="组合" />
            <Row icon="rotate" text="旋转" />
          </Stack>
          <Big icon="pane" text="选择窗格" />
          <Stack>
            <Row icon="raise" text="上移一层" />
            <Row icon="lower" text="下移一层" />
          </Stack>
        </Group>
        <Group $gap={0} $r={5}>
          <Stack>
            <Size id="h" icon="tall" label="高度:" value="12.09厘米" />
            <Size id="w" icon="wide" label="宽度:" value="29.21厘米" />
          </Stack>
          <Launcher aria-label="更多大小设置" />
        </Group>
      </Ribbon>

      <Body>
        <Outline>
          <OutlineHead>
            <OutlineTab aria-label="收起"><Icon n="collapse" /></OutlineTab>
            <OutlineTab $l={74}>大纲</OutlineTab>
            <OutlineTab $l={13} $on>幻灯片</OutlineTab>
          </OutlineHead>
          <ThumbList>
            <ThumbItem>1<Thumb>极光下载站</Thumb></ThumbItem>
            <ThumbItem $on>2<Thumb $on><MiniTitle>极光下载站</MiniTitle></Thumb></ThumbItem>
          </ThumbList>
        </Outline>

        <Center>
          <Stage>
            <Desk>
              <Slide>
                <SlideTitle>极光下载站</SlideTitle>
                <Selection>
                  <Rotor><Icon n="spin" /><RotorStem /></Rotor>
                  {HANDLES.map((p) => {
                    const [x, y] = p.split(",");
                    return <Handle key={p} $x={x} $y={y} />;
                  })}
                  <Bullet />
                  <InsertGrid>
                    {["table", "chart", "photo", "video"].map((n) => <button key={n} aria-label={n}><Icon n={n} /></button>)}
                  </InsertGrid>
                </Selection>
                <FloatTools>
                  <FoldBtn aria-label="收起工具"><FoldDash /></FoldBtn>
                  {FLOATS.map((n) => <FloatBtn key={n} aria-label={n}><Icon n={n} /></FloatBtn>)}
                </FloatTools>
              </Slide>
            </Desk>
            <ScrollCol>
              <ScrollBtn $h={26} aria-label="向上"><Caret $up /></ScrollBtn>
              <ScrollGap />
              <ScrollThumb />
              <ScrollBtn $h={19} aria-label="向下"><Caret /></ScrollBtn>
              <ScrollBtn $h={19} aria-label="上一页"><Caret $up /><Caret $up /></ScrollBtn>
              <ScrollBtn $h={19} aria-label="下一页"><Caret /><Caret /></ScrollBtn>
            </ScrollCol>
          </Stage>
          <Notes><Icon n="note" />单击此处添加备注</Notes>
        </Center>

        <Props>
          <PropsHead>
            <HeadBtn>对象属性<Caret /></HeadBtn>
            <HeadBtn aria-label="关闭"><Icon n="panelClose" /></HeadBtn>
          </PropsHead>
          <PropsTabs>
            <PropsTab $on>形状选项</PropsTab>
            <PropsTab>文本选项</PropsTab>
          </PropsTabs>
          <SubTabs>
            {SUBTABS.map(([n, t]) => <SubTab key={n} $on={n === "tabSize"}><Icon n={n} />{t}</SubTab>)}
          </SubTabs>
          <Sections>
            {["大小", "位置", "文本框", "可选文字"].map((t) => <Section key={t}><Wedge />{t}</Section>)}
          </Sections>
        </Props>

        <Rail>
          <RailGrip><Icon n="grip" /></RailGrip>
          {RAIL.map((n) => <RailBtn key={n} $on={n === "sliders"} aria-label={n}><Icon n={n} /></RailBtn>)}
          <RailRule />
          <RailBtn aria-label="更多"><Icon n="more" /></RailBtn>
        </Rail>
      </Body>

      <Status>
        幻灯片 2 / 2
        <VRule $h={24} $m="0 10px 0 14px" />
        Office 主题
        <VRule $h={24} $m="0 10px 0 14px" />
        <StatusEnd>
          <StBtn $w={34} aria-label="备注"><Icon n="stLines" /><Caret /></StBtn>
          <StBtn $w={23} $on aria-label="普通视图"><Icon n="stNormal" /></StBtn>
          <StBtn $w={30} aria-label="浏览"><Icon n="stGrid" /></StBtn>
          <StBtn $w={22} aria-label="阅读"><Icon n="stBook" /></StBtn>
          <StBtn $w={31} aria-label="演讲"><Icon n="stCam" /></StBtn>
          <PlayBtn aria-label="播放"><Icon n="play" /></PlayBtn>
          <StBtn $w={15} aria-label="播放选项"><Caret /></StBtn>
          <StBtn $w={44} $l={9}>98%<Caret /></StBtn>
          <StBtn $w={24} $r={5} aria-label="缩小"><Icon n="minus" /></StBtn>
          <Zoom type="range" min={0} max={100} defaultValue={44} aria-label="缩放" />
          <StBtn $w={12} aria-label="放大"><Icon n="add" /></StBtn>
          <StBtn $w={12} $l={14} aria-label="适应窗口"><Icon n="fit" /></StBtn>
        </StatusEnd>
      </Status>

      <Meter>
        <MeterBadge><Icon n="shield" /><BadgeText>1</BadgeText></MeterBadge>
        <MeterLoad><MeterNumber>75</MeterNumber>%</MeterLoad>
        <MeterBar />
        <NetRow><Icon n="netUp" /><span>0.0<Unit>K/s</Unit></span></NetRow>
        <NetRow><Icon n="netDown" /><span>0.0<Unit>K/s</Unit></span></NetRow>
      </Meter>

      <Ime>
        <ImeLogo><Icon n="sogou" /></ImeLogo>
        {["zhong", "comma", "mic", "keys", "apps"].map((n) => <Icon key={n} n={n} />)}
      </Ime>

      <Watermark>
        <Svg width="43" height="42" viewBox="0 0 43 42" aria-hidden="true">
          <defs>
            <linearGradient id="sea" x1="0" y1="1" x2="1" y2="0"><stop offset="0" stopColor="#4b7fc4" /><stop offset="1" stopColor="#5fc3ea" /></linearGradient>
            <linearGradient id="leaf" x1="0" y1="1" x2="1" y2="0"><stop offset="0" stopColor="#d9de4a" /><stop offset="1" stopColor="#4dba7c" /></linearGradient>
          </defs>
          <path fill="url(#sea)" stroke="none" d="M43 1C22-1 2 12 1 25c0 4 3 6 6 6-3-8 6-21 36-30z" />
          <path fill="url(#sea)" stroke="none" d="M34 12C20 13 8 20 9 28c1 5 8 6 13 3-5 0-8-2-7-6 1-5 9-10 19-13z" />
          <path fill="url(#leaf)" stroke="none" d="M29 14c12-2 14 4 11 11-4 9-16 15-36 16 12-3 22-7 27-14 4-6 3-10-2-13z" />
        </Svg>
        <MarkText>极光下载站<MarkUrl>www.xz7.com</MarkUrl></MarkText>
      </Watermark>
    </Shell>
  );
}
